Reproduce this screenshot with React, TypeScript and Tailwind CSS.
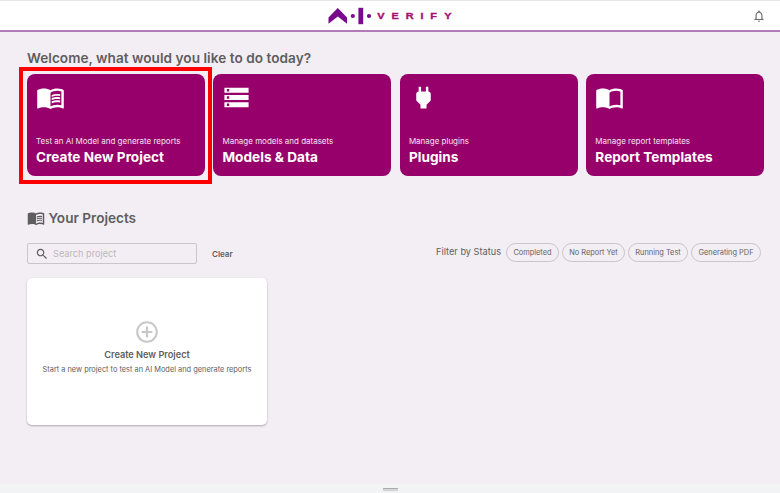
import type { ReactNode } from "react";

const BOOK =
  "M21 5c-1.11-.35-2.33-.5-3.5-.5-1.95 0-4.05.4-5.5 1.5-1.45-1.1-3.55-1.5-5.5-1.5S2.45 4.9 1 6v14.65c0 .25.25.5.5.5.1 0 .15-.05.25-.05C3.1 20.45 5.05 20 6.5 20c1.95 0 4.05.4 5.5 1.5 1.35-.85 3.8-1.5 5.5-1.5 1.65 0 3.35.3 4.75 1.05.1.05.15.05.25.05.25 0 .5-.25.5-.5V6c-.6-.45-1.25-.75-2-1zm0 13.5c-1.1-.35-2.3-.5-3.5-.5-1.7 0-4.15.65-5.5 1.5V8c1.35-.85 3.8-1.5 5.5-1.5 1.2 0 2.4.15 3.5.5v11.5z";
const LINES =
  "M17.5 10.5c.88 0 1.73.09 2.5.26V9.24c-.79-.15-1.64-.24-2.5-.24-1.7 0-3.24.29-4.5.83v1.66c1.13-.64 2.7-.99 4.5-.99zM13 12.49v1.66c1.13-.64 2.7-.99 4.5-.99.88 0 1.73.09 2.5.26V11.9c-.79-.15-1.64-.24-2.5-.24-1.7 0-3.24.3-4.5.83zm4.5 1.84c-1.7 0-3.24.29-4.5.83v1.66c1.13-.64 2.7-.99 4.5-.99.88 0 1.73.09 2.5.26v-1.52c-.79-.16-1.64-.24-2.5-.24z";
const STORAGE =
  "M2 20h20v-4H2v4zm2-3h2v2H4v-2zM2 4v4h20V4H2zm4 3H4V5h2v2zm-4 7h20v-4H2v4zm2-3h2v2H4v-2z";
const POWER =
  "M16.01 7L16 3h-2v4h-4V3H8v4h-.01C7 6.99 6 7.99 6 8.99v5.49L9.5 18v3h5v-3l3.5-3.51v-5.5c0-1-1-2-1.99-1.99z";
const BELL =
  "M12 22c1.1 0 2-.9 2-2h-4c0 1.1.9 2 2 2zm6-6v-5c0-3.07-1.63-5.64-4.5-6.32V4c0-.83-.67-1.5-1.5-1.5s-1.5.67-1.5 1.5v.68C7.64 5.36 6 7.92 6 11v5l-2 2v1h16v-1l-2-2zm-2 1H8v-6c0-2.48 1.51-4.5 4-4.5s4 2.02 4 4.5v6z";
const SEARCH =
  "M15.5 14h-.79l-.28-.27C15.41 12.59 16 11.11 16 9.5 16 5.91 13.09 3 9.5 3S3 5.91 3 9.5 5.91 16 9.5 16c1.61 0 3.09-.59 4.23-1.57l.27.28v.79l5 4.99L20.49 19l-4.99-5zm-6 0C7.01 14 5 11.99 5 9.5S7.01 5 9.5 5 14 7.01 14 9.5 11.99 14 9.5 14z";
const ADD =
  "M13 7h-2v4H7v2h4v4h2v-4h4v-2h-4V7zm-1-5C6.48 2 2 6.48 2 12s4.48 10 10 10 10-4.48 10-10S17.52 2 12 2zm0 18c-4.41 0-8-3.59-8-8s3.59-8 8-8 8 3.59 8 8-3.59 8-8 8z";

function Icon({ d, className }: { d: string; className: string }) {
  return (
    <svg viewBox="0 0 24 24" fill="currentColor" className={className}>
      <path d={d} />
    </svg>
  );
}

function Logo() {
  return (
    <svg viewBox="0 0 126 18" className="h-[18px] w-[126px]">
      <path d="M.5 10.5 9.8 1l9.2 9.5v6.3L9.8 9.6.5 16.8z" fill="#780a8c" />
      <circle cx="24.8" cy="9" r="2.1" fill="#780a8c" />
      <rect x="30.4" y="0.8" width="4.8" height="16.4" fill="#780a8c" />
      <circle cx="41" cy="9" r="2.1" fill="#780a8c" />
      <g
        fill="#a3106f"
        stroke="#a3106f"
        strokeWidth="0.3"
        fontFamily="Liberation Sans, Arial, sans-serif"
        fontWeight="700"
        fontSize="8.4"
      >
        {["V", "E", "R", "I", "F", "Y"].map((c, i) => (
          <text
            key={i}
            transform={`translate(${[52.8, 67.2, 81.8, 94, 105.7, 119.8][i]} 12) scale(1.3 1)`}
            textAnchor="middle"
          >
            {c}
          </text>
        ))}
      </g>
    </svg>
  );
}

function ActionCard({ icon, hint, title }: { icon: ReactNode; hint: string; title: string }) {
  return (
    <button className="flex h-[102px] flex-col items-start rounded-[8px] bg-[#97006b] pl-[9px] pt-[9px] text-left text-white">
      {icon}
      <span className="mt-[22px] text-[8px] leading-[14px] tracking-[-0.01px] text-[#f5e2ef]">{hint}</span>
      <span className="mt-px text-[13.6px] font-bold leading-[16px] tracking-[0.02px]">{title}</span>
    </button>
  );
}

function Chip({ label, width }: { label: string; width: string }) {
  return (
    <button
      className={`flex h-[19px] items-center justify-center rounded-full border border-[#c9c5c9] pt-px text-[7.4px] text-[#656266] ${width}`}
    >
      {label}
    </button>
  );
}

export default function App() {
  return (
    <div className="flex h-[493px] w-[780px] flex-col overflow-hidden bg-[#f3eef4] font-['Inter',sans-serif] text-[#5f5d60]">
      <header className="flex h-8 shrink-0 border-b-2 border-t border-b-[#b17bba] border-t-[#e6e6e6] bg-white">
        <div className="w-[328px]" />
        <div className="pt-[6px]">
          <Logo />
        </div>
        <div className="ml-auto mr-[14px] pt-[8px]">
          <Icon d={BELL} className="size-[14px] text-[#707070]" />
        </div>
      </header>

      <main className="flex flex-1 flex-col px-[27px]">
        <h1 className="mt-[16px] text-[13.6px] font-semibold leading-[20px] tracking-[0.04px]">
          Welcome, what would you like to do today?
        </h1>
        <div className="-ml-[8px] -mr-[11px] mt-[6px] grid h-[102px] grid-cols-4 gap-x-[8.8px] pl-[8px]">
          <div className="-ml-[8px] -mr-[7px] -mt-[7px] h-[117px] border-4 border-[#ff0000] p-[4px] pr-[3px] pt-[3px] [&>button]:w-full">
            <ActionCard
              icon={<Icon d={BOOK + LINES} className="size-[29px]" />}
              hint="Test an AI Model and generate reports"
              title="Create New Project"
            />
          </div>
          <ActionCard
            icon={<Icon d={STORAGE} className="size-[29px]" />}
            hint="Manage models and datasets"
            title="Models &amp; Data"
          />
          <ActionCard
            icon={<Icon d={POWER} className="size-[29px]" />}
            hint="Manage plugins"
            title="Plugins"
          />
          <ActionCard
            icon={<Icon d={BOOK} className="size-[29px]" />}
            hint="Manage report templates"
            title="Report Templates"
          />
        </div>

        <h2 className="mt-[32px] flex h-[20px] items-center gap-[3.5px] text-[13.6px] font-semibold">
          <Icon d={BOOK + LINES} className="size-[18px]" />
          Your Projects
        </h2>

        <div className="mt-[15px] flex h-[21px] items-center">
          <div className="flex h-[21px] w-[170px] items-center rounded-[2px] border border-[#c9c5c9] pl-[7px]">
            <Icon d={SEARCH} className="size-[14px]" />
            <span className="ml-[4px] text-[9.2px] text-[#bcb8bd]">Search project</span>
          </div>
          <span className="ml-[15px] text-[8px] font-semibold">Clear</span>
          <div className="-mr-[8px] ml-auto flex items-center gap-[3px] pb-[3px]">
            <span className="mr-[2px] pb-[1px] text-[9.2px]">Filter by Status</span>
            <Chip label="Completed" width="w-[53px]" />
            <Chip label="No Report Yet" width="w-[63px]" />
            <Chip label="Running Test" width="w-[60px]" />
            <Chip label="Generating PDF" width="w-[70px]" />
          </div>
        </div>

        <section className="mt-[14px] flex h-[147px] w-[240px] flex-col items-center rounded-[5px] bg-white pt-[41px] shadow-[0_1px_2px_rgba(0,0,0,0.3)]">
          <Icon d={ADD} className="size-[26px] text-[#c8c8c8]" />
          <strong className="mt-[3px] text-[9.2px] font-semibold leading-[13px]">Create New Project</strong>
          <span className="mt-[3px] text-[7.4px] leading-[11px]">
            Start a new project to test an AI Model and generate reports
          </span>
        </section>
      </main>

      <footer className="flex h-[9px] shrink-0 justify-center bg-[#f1f3f4] pt-[4px]">
        <div className="h-[3px] w-[15px] border-y border-b-[#cfcfd1] border-t-[#a9a9ab] bg-[#d8d9da]" />
      </footer>
    </div>
  );
}
